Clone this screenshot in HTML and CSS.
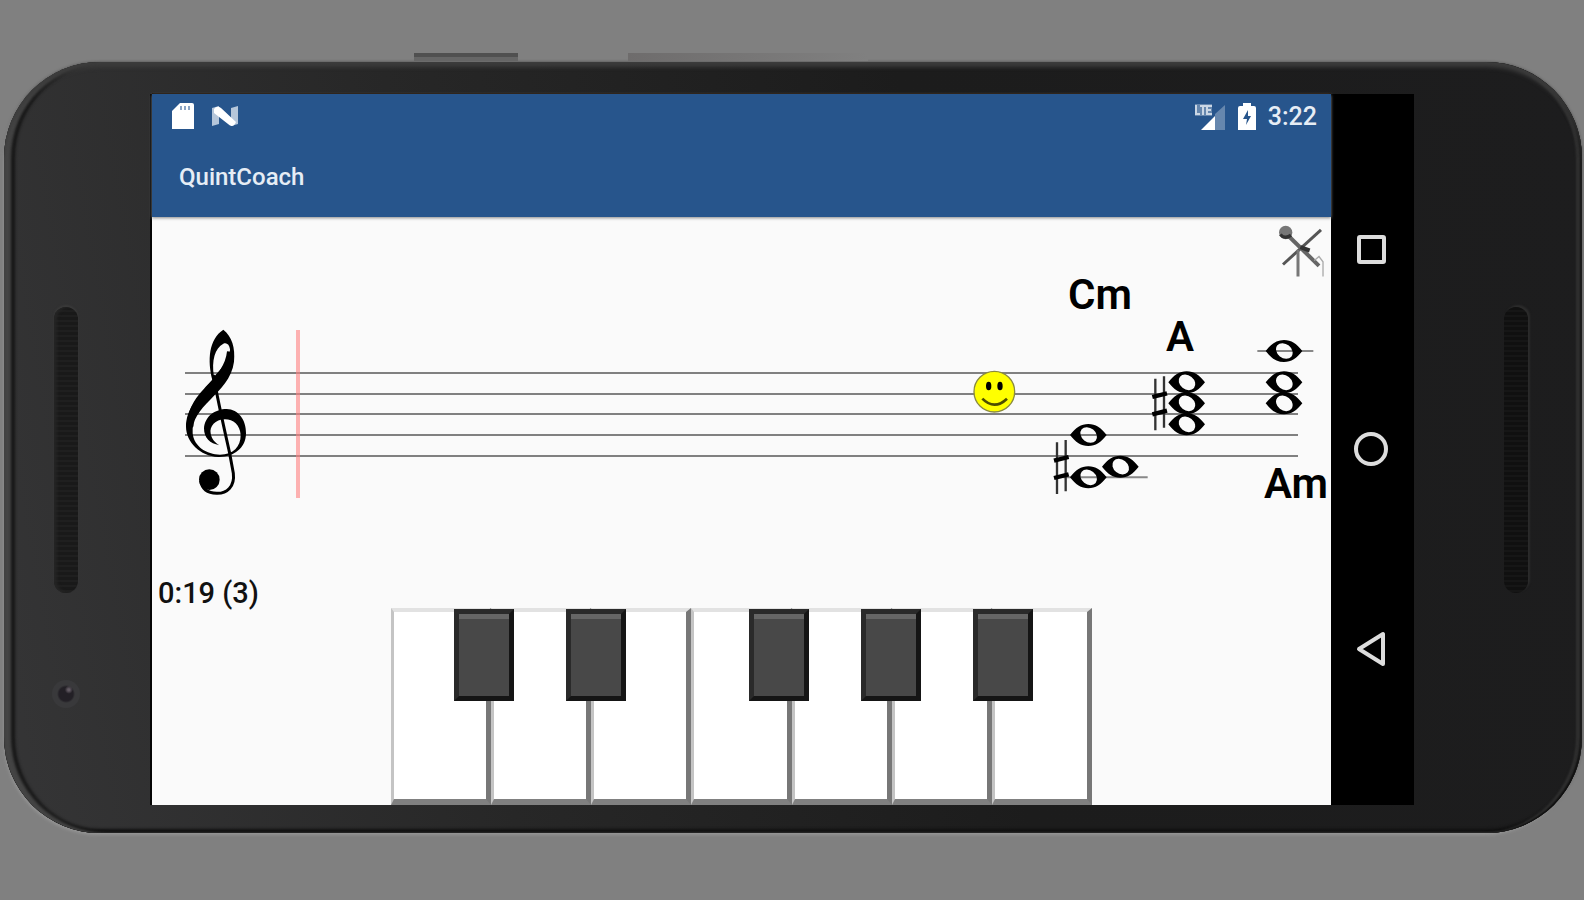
FILE: index.html
```html
<!DOCTYPE html>
<html lang="en">
<head>
    <meta charset="UTF-8">
    <meta name="viewport" content="width=device-width, initial-scale=1.0">
    <title>QuintCoach</title>
    <link rel="stylesheet" href="styles.css">
</head>
<body>
    <div class="phone">
        <span class="side-button power"></span>
        <span class="side-button volume"></span>

        <div class="bezel">
            <span class="speaker"></span>
            <span class="camera"></span>
        </div>

        <div class="screen">
            <header>
                <div class="status">
                    <svg class="sd" width="22" height="26" viewBox="0 0 22 26">
                        <path d="M8 0H20Q22 0 22 2V26H0V8Z" fill="#fff"/>
                        <path d="M9 3V7M13 3V7M17 3V7" stroke="#8ba5c5" stroke-width="2"/>
                    </svg>
                    <svg width="28" height="22" viewBox="0 0 28 22">
                        <path d="M1 3L8 1V19L1 21ZM20 3L27 1V19L20 21Z" fill="#b5c6da"/>
                        <path d="M3 4Q6 0 10 3L25 17Q22 24 17 19L3 8Z" fill="#fff"/>
                    </svg>
                    <svg class="signal" width="34" height="27" viewBox="0 0 34 27">
                        <path d="M33 2V27H23V11Z" fill="#6687ae"/>
                        <path d="M9 27L23 13V27Z" fill="#fff"/>
                        <path d="M3 1H20V13H3Z" fill="#6687ae"/>
                        <path d="M4 2V11H8M8 3H14M11 3V12M20 3H15V11H20M15 7H19" fill="none" stroke="#cbd7e5" stroke-width="2"/>
                    </svg>
                    <svg width="18" height="27" viewBox="0 0 18 27">
                        <path d="M5 0H13V3H16Q18 3 18 5V27H0V5Q0 3 2 3H5Z" fill="#fff"/>
                        <path d="M10 7L5 16H9L8 22L13 13H10Z" fill="#27558c"/>
                    </svg>
                    <span class="time">3:22</span>
                </div>
                <h1>QuintCoach</h1>
            </header>

            <main>
                <button class="tools" aria-label="Settings">
                    <svg width="50" height="57" viewBox="0 0 150 170" fill="none">
                        <path d="M18 124L132 20" stroke="#555" stroke-width="9"/>
                        <path d="M63 80V160" stroke="#777" stroke-width="9"/>
                        <path d="M30 34L126 128" stroke="#666" stroke-width="12"/>
                        <path d="M70 72L98 82" stroke="#333" stroke-width="12"/>
                        <circle cx="26" cy="28" r="20" fill="#777"/>
                        <path d="M10 34Q24 50 42 36" stroke="#333" stroke-width="10"/>
                        <path d="M112 112L126 100L138 116V160" stroke="#aaa" stroke-width="4"/>
                    </svg>
                </button>

                <svg class="score" viewBox="0 0 1179 361">
                    <defs>
                        <path id="note" fill-rule="evenodd" d="M-55 0C-38 -22 -22 -33 0 -33C22 -33 38 -22 55 0C38 22 22 33 0 33C-22 33 -38 22 -55 0ZM-20 -17A27 21 38 1 0 22 17A27 21 38 1 0 -20 -17Z"/>
                        <g id="sharp">
                            <path d="M-13 -75V80M13 -82V72" stroke-width="7" stroke="#333"/>
                            <path d="M-22 -20L22 -31M-22 32L22 21" stroke-width="13" stroke="#000"/>
                        </g>
                    </defs>

                    <!-- staff -->
                    <path class="staff" d="M33 156H1146M33 177H1146M33 197H1146M33 218H1146M33 239H1146"/>

                    <!-- treble clef -->
                    <svg x="18" y="93" width="150" height="200" viewBox="0 0 450 600">
                        <path fill-rule="evenodd" d="M127 210C112 150 116 88 160 59C186 80 196 112 192 155C186 205 150 238 120 270C90 300 65 330 68 370C72 410 110 434 150 434C190 434 212 410 212 375C210 345 190 328 165 328C135 328 118 350 122 370C125 388 135 398 148 406C120 400 102 385 102 355C104 320 135 297 170 297C205 298 229 330 228 370C228 415 190 442 145 441C90 438 48 395 48 350C48 300 80 265 127 210ZM132 200C150 180 182 150 180 118C178 103 170 97 160 101C135 115 124 150 132 200Z"/>
                        <path fill="none" stroke="#000" stroke-width="9" d="M130 195C143 270 160 345 178 425L190 490C195 530 170 551 140 550C115 549 96 537 92 512"/>
                        <circle cx="118" cy="509" r="31"/>
                        <path fill="none" stroke="#000" stroke-width="20" d="M181 125C176 175 145 205 110 242C78 275 60 310 60 350"/>
                    </svg>

                    <!-- play position -->
                    <path class="cursor" d="M146 113V281"/>

                    <!-- chords -->
                    <svg x="798" y="43" width="381" height="260" viewBox="0 0 1143 780">
                        <path class="ledger" d="M340 652H593M922 273H1090"/>
                        <use href="#sharp" x="334" y="622"/>
                        <use href="#note" x="415" y="525"/>
                        <use href="#note" x="415" y="652"/>
                        <use href="#note" x="511" y="620"/>
                        <use href="#sharp" x="629" y="431"/>
                        <use href="#note" x="710" y="367"/>
                        <use href="#note" x="710" y="430"/>
                        <use href="#note" x="710" y="493"/>
                        <use href="#note" x="1002" y="273"/>
                        <use href="#note" x="1002" y="367"/>
                        <use href="#note" x="1002" y="430"/>

                        <circle cx="133" cy="395" r="61" fill="#ff0" stroke="#8a8a40" stroke-width="4"/>
                        <ellipse cx="116" cy="378" rx="8" ry="13"/>
                        <ellipse cx="150" cy="378" rx="8" ry="13"/>
                        <path d="M97 416Q133 452 171 416" fill="none" stroke="#4d4d00" stroke-width="8"/>
                    </svg>
                    <text x="916" y="92">Cm</text>
                    <text x="1014" y="134">A</text>
                    <text x="1112" y="281">Am</text>
                </svg>

                <p class="timer">0:19 (3)</p>

                <div class="piano">
                    <button class="white" aria-label="C"></button>
                    <button class="white" aria-label="D"></button>
                    <button class="white" aria-label="E"></button>
                    <button class="white" aria-label="F"></button>
                    <button class="white" aria-label="G"></button>
                    <button class="white" aria-label="A"></button>
                    <button class="white" aria-label="B"></button>
                    <button class="black cis" aria-label="C sharp"></button>
                    <button class="black dis" aria-label="D sharp"></button>
                    <button class="black fis" aria-label="F sharp"></button>
                    <button class="black gis" aria-label="G sharp"></button>
                    <button class="black ais" aria-label="A sharp"></button>
                </div>
            </main>
        </div>

        <nav>
            <button aria-label="Recent apps">
                <svg width="36" height="36" viewBox="0 0 36 36"><rect x="6" y="6" width="25" height="25" rx="1"/></svg>
            </button>
            <button aria-label="Home">
                <svg width="36" height="36" viewBox="0 0 36 36"><circle cx="18" cy="18" r="15"/></svg>
            </button>
            <button aria-label="Back">
                <svg width="36" height="36" viewBox="0 0 36 36"><path d="M6 18L30 3V33Z"/></svg>
            </button>
        </nav>

        <div class="bezel right">
            <span class="speaker"></span>
        </div>
    </div>
</body>
</html>
```
FILE: styles.css
```css
* {
    box-sizing: border-box;
}
body {
    margin: 0;
    padding: 62px 2px 60px 4px;
    background-color: #808080;
    color: #111;
    font-family: Roboto, sans-serif;
}
button {
    padding: 0;
    border: none;
    background: none;
    cursor: pointer;
}
svg {
    display: block;
}

/* phone */
.phone {
    position: relative;
    display: grid;
    grid-template-columns: 148px 1fr 83px 168px;
    padding: 32px 0 28px;
    border-radius: 96px;
    background: linear-gradient(80deg, #353536 0%, #272727 30%, #1c1c1c 60%, #1d1d1e 100%);
    box-shadow:
        inset 0 5px 4px #3c3c3c,
        inset 7px 0 3px #454545,
        inset 11px 0 3px #161616,
        inset -2px 0 2px #080808,
        inset -6px 0 2px #303030,
        inset 0 -4px 3px #101010,
        -1px 2px 3px #989898,
        0 0 3px #444;
}
.side-button {
    position: absolute;
    top: -9px;
    height: 8px;
}
.power {
    left: 410px;
    width: 104px;
    background: #666;
    border-top: 4px solid #505050;
}
.volume {
    left: 624px;
    width: 240px;
    background: linear-gradient(90deg, #6e6c6c, #808080);
}
.bezel {
    display: flex;
    flex-direction: column;
    align-items: center;
    padding-top: 213px;
    padding-right: 24px;
}
.bezel.right {
    padding-right: 0;
    padding-left: 36px;
}
.speaker {
    width: 24px;
    height: 286px;
    border-radius: 12px;
    background: repeating-linear-gradient(#191919 0 3px, #1f1f1f 3px 5px);
    box-shadow: inset 3px 0 3px #252525, 0 -2px 2px #3a3a3a;
}
.right .speaker {
    background: repeating-linear-gradient(#101010 0 3px, #161616 3px 5px);
    box-shadow: 2px -2px 2px #2c2c2c;
}
.camera {
    width: 28px;
    height: 28px;
    margin-top: 87px;
    border-radius: 50%;
    background:
        radial-gradient(circle at 60% 35%, #625a63 0 1px, transparent 4px),
        radial-gradient(circle, #232026 0 7px, #39393b 9px);
}

/* screen */
.screen {
    display: flex;
    flex-direction: column;
    background: #fafafa;
    box-shadow: -2px 0 0 #050505, 0 -1px 0 #1c1208;
}
header {
    position: relative;
    background: #27558c;
    color: #fff;
    box-shadow: 0 1px 3px #888;
}
.status {
    display: flex;
    align-items: center;
    height: 44px;
    padding: 0 14px 0 20px;
}
.sd {
    margin-right: 17px;
}
.signal {
    margin-left: auto;
    margin-right: 12px;
}
.time {
    margin-left: 12px;
    font-size: 25px;
    font-weight: 500;
    color: #e6edf5;
}
h1 {
    margin: 0;
    padding-left: 27px;
    font-size: 24px;
    font-weight: 500;
    line-height: 79px;
    color: #e6edf5;
}
main {
    position: relative;
}
.tools {
    position: absolute;
    top: 6px;
    right: 4px;
}

/* score */
.score {
    width: 100%;
}
.score text {
    font-size: 42px;
    font-weight: 600;
}
.staff {
    stroke: #808080;
    stroke-width: 2;
}
.ledger {
    stroke: #888;
    stroke-width: 6;
}
.cursor {
    stroke: #ff8080;
    stroke-opacity: 0.6;
    stroke-width: 4;
}
.timer {
    margin: 0;
    padding-left: 6px;
    font-size: 29px;
    font-weight: 500;
    line-height: 30px;
}

/* piano */
.piano {
    position: relative;
    display: grid;
    grid-template-columns: repeat(7, 1fr);
    height: 197px;
    margin: 0 239px;
}
.white {
    background: #fff;
    border-style: solid;
    border-width: 4px 5px 6px 3px;
    border-color: #e2e2e2 #777 #808080 #c4c4c4;
}
.black {
    position: absolute;
    top: 1px;
    width: 60px;
    height: 92px;
    background: #484848;
    border: 5px solid;
    border-color: #2a2a2a #151515 #151515 #2a2a2a;
    box-shadow: inset 0 5px 0 #666;
}
.cis {
    left: 9%;
}
.dis {
    left: 25%;
}
.fis {
    left: 51%;
}
.gis {
    left: 67%;
}
.ais {
    left: 83%;
}

/* navigation bar */
nav {
    display: flex;
    flex-direction: column;
    align-items: center;
    justify-content: center;
    gap: 164px;
    padding: 0 4px 2px 0;
    background: #000;
}
nav svg {
    fill: none;
    stroke: #ddd;
    stroke-width: 4;
    stroke-linejoin: round;
}
```
